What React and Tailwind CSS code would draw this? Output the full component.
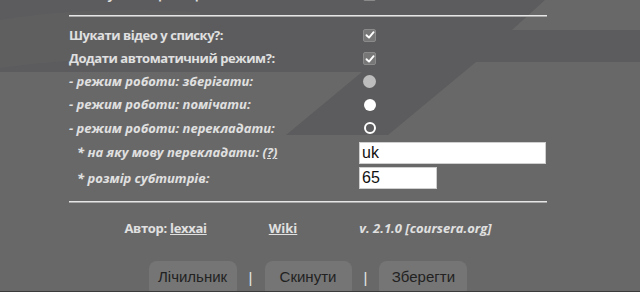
import React from 'react'

const labelFont = { fontFamily: '"Open Sans", "Liberation Sans", sans-serif' }
const btnFont = { fontFamily: '"Liberation Sans", Arial, sans-serif' }

function Check() {
  return (
    <span className="ml-[4px] flex h-[13px] w-[13px] items-center justify-center rounded-[2px] border border-[#8a8a8a] bg-[#777777]">
      <svg width="10" height="10" viewBox="0 0 10 10">
        <path d="M1.5 5.2 L4 7.6 L8.6 2.2" fill="none" stroke="#ffffff" strokeWidth="1.9" strokeLinecap="round" strokeLinejoin="round" />
      </svg>
    </span>
  )
}

function Row({ children, control, italic, indent, tall }) {
  return (
    <div className={`grid grid-cols-[290px_1fr] items-center ${tall ? 'h-[25.5px]' : 'h-[23.25px]'}`}>
      <span
        style={labelFont}
        className={`text-[13px] font-bold text-[#e0e0e0] ${italic ? 'italic' : 'tracking-[-0.45px]'} ${indent ? 'pl-[8px]' : ''}`}
      >
        {children}
      </span>
      <div className="flex items-center">{control}</div>
    </div>
  )
}

function Btn({ children, w }) {
  return (
    <button style={btnFont} className={`h-[36px] ${w} rounded-[8px] bg-[#757575] pb-[3px] text-[15px] text-[#222]`}>
      {children}
    </button>
  )
}

export default function App() {
  return (
    <div className="relative h-[292px] w-[640px] overflow-hidden bg-[#686868]">
      {/* background shapes */}
      <svg className="absolute inset-0" width="640" height="292" viewBox="0 0 640 292">
        <polygon
          points="0,0 545,0 512,30 640,30 640,62 476,62 388,135 286,135 362,72 0,72"
          fill="#5c5c5e"
        />
        <path d="M0 20 C 60 10, 120 8, 200 12 L 200 60 C 120 56, 60 60, 0 68 Z" fill="#616162" opacity="0.6" />
      </svg>

      <div className="relative ml-[69px] mt-[-17px] w-[478px]">
        <Row control={<Check />}>Показувати щось ще:</Row>
        <div className="mt-[9px] mb-[6.5px] h-[2px] border-t border-b border-t-[#e6e6e6] border-b-[#a9a9a9]" />

        <Row control={<Check />}>Шукати відео у списку?:</Row>
        <Row control={<Check />}>Додати автоматичний режим?:</Row>
        <Row italic control={<span className="ml-[4px] h-[13px] w-[13px] rounded-full bg-[#bdbdbd]" />}>
          - режим роботи: зберігати:
        </Row>
        <Row italic control={<span className="ml-[5px] h-[12px] w-[12px] rounded-full bg-white" />}>
          - режим роботи: помічати:
        </Row>
        <Row italic control={<span className="ml-[5px] h-[12px] w-[12px] rounded-full border-2 border-white bg-[#5c5c5e]" />}>
          - режим роботи: перекладати:
        </Row>
        <Row
          italic
          indent
          tall
          control={
            <input
              readOnly
              value="uk"
              style={btnFont}
              className="h-[22px] w-[187px] border border-[#cfcfcf] bg-white px-[2px] text-[16px] text-[#111] outline-none"
            />
          }
        >
          * на яку мову перекладати: <span className="underline">(?)</span>
        </Row>
        <Row
          italic
          indent
          tall
          control={
            <input
              readOnly
              value="65"
              style={btnFont}
              className="h-[22px] w-[78px] border border-[#cfcfcf] bg-white px-[2px] text-[16px] text-[#111] outline-none"
            />
          }
        >
          * розмір субтитрів:
        </Row>

        <div className="mt-[10px] h-[2px] border-t border-b border-t-[#e6e6e6] border-b-[#a9a9a9]" />

        <div
          style={labelFont}
          className="mt-[16px] flex h-[20px] items-center justify-center gap-[62px] text-[13px] font-bold text-[#e0e0e0]"
        >
          <span className="tracking-[-0.3px]">
            Автор: <span className="underline">lexxai</span>
          </span>
          <span className="underline">Wiki</span>
          <span className="italic">v. 2.1.0 [coursera.org]</span>
        </div>

        <div style={btnFont} className="mt-[22px] flex items-start justify-center gap-[12px] text-[15px]">
          <Btn w="w-[88px]">Лічильник</Btn>
          <span className="pt-[6px] text-[#e6e6e6]">|</span>
          <Btn w="w-[87px]">Скинути</Btn>
          <span className="pt-[6px] text-[#e6e6e6]">|</span>
          <Btn w="w-[88px]">Зберегти</Btn>
        </div>
      </div>
      <div className="absolute bottom-0 left-0 h-[1px] w-full bg-[#3a3a3a]" />
    </div>
  )
}
